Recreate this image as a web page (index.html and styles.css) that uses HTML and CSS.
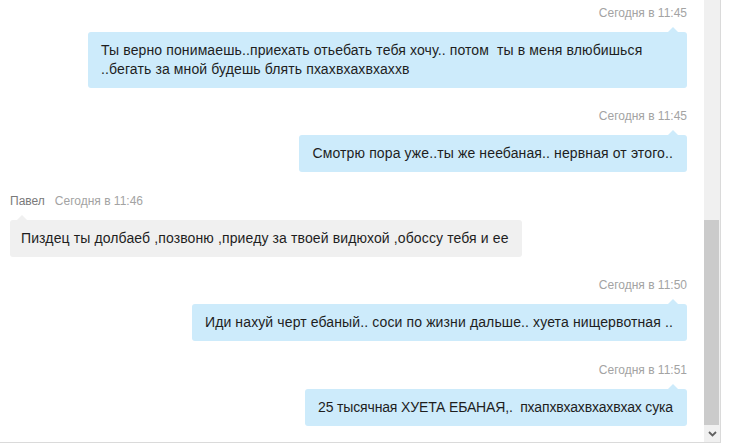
FILE: index.html
```html
<!DOCTYPE html>
<html lang="ru">
<head>
<meta charset="utf-8">
<title>Диалог</title>
<link rel="stylesheet" href="styles.css">
</head>
<body>
<div class="window">
  <div class="messages">
    <div class="msg out">
      <div class="meta"><span class="time">Сегодня в 11:45</span></div>
      <div class="bubble">Ты верно понимаешь..приехать отьебать тебя хочу.. потом&nbsp; ты в меня влюбишься ..бегать за мной будешь блять пхахвхахвхаххв</div>
    </div>
    <div class="msg out">
      <div class="meta"><span class="time">Сегодня в 11:45</span></div>
      <div class="bubble">Смотрю пора уже..ты же неебаная.. нервная от этого..</div>
    </div>
    <div class="msg in">
      <div class="meta"><span class="name">Павел</span><span class="time">Сегодня в 11:46</span></div>
      <div class="bubble">Пиздец ты долбаеб ,позвоню ,приеду за твоей видюхой ,обоссу тебя и ее</div>
    </div>
    <div class="msg out">
      <div class="meta"><span class="time">Сегодня в 11:50</span></div>
      <div class="bubble">Иди нахуй черт ебаный.. соси по жизни дальше.. хуета нищервотная ..</div>
    </div>
    <div class="msg out">
      <div class="meta"><span class="time">Сегодня в 11:51</span></div>
      <div class="bubble narrow">25 тысячная ХУЕТА ЕБАНАЯ,.&nbsp; пхапхвхахвхахвхах сука</div>
    </div>
  </div>
  <div class="scrollbar">
    <div class="track"></div>
    <div class="thumb"></div>
    <div class="arrow">
      <svg width="9" height="6" viewBox="0 0 9 6"><path d="M1 1 L4.5 4.5 L8 1" fill="none" stroke="#606060" stroke-width="1.8"/></svg>
    </div>
  </div>
</div>
</body>
</html>
```

FILE: styles.css
```css
* { box-sizing: border-box; }
html, body { margin: 0; padding: 0; background: #ffffff; }
body {
  font-family: "Liberation Sans", Arial, sans-serif;
  color: #1e1e1e;
  width: 735px;
  height: 446px;
  overflow: hidden;
}
.window {
  display: flex;
  width: 721px;
  height: 443px;
  border-right: 1px solid #dadada;
  border-bottom: 1px solid #dadada;
}
.messages {
  flex: 1;
  display: flex;
  flex-direction: column;
  gap: 21.4px;
  padding: 6px 17px 0 10px;
}
.msg {
  display: flex;
  flex-direction: column;
}
.msg.out { align-items: flex-end; }
.msg.in { align-items: flex-start; }
.meta {
  font-size: 12px;
  line-height: 14px;
  height: 14px;
  margin-bottom: 12px;
  display: flex;
  gap: 10px;
}
.time { color: #a3a3a3; }
.name { color: #7a7a7a; }
.bubble {
  position: relative;
  font-size: 14px;
  letter-spacing: 0.12px;
  line-height: 19px;
  padding: 9px 14px 9px 13px;
  border-radius: 3px;
  max-width: 599px;
}
.bubble.narrow { letter-spacing: -0.15px; }
.out .bubble { background: #cdebfb; }
.in .bubble { background: #f0f0f0; padding-left: 11px; padding-right: 13px; }
.bubble::before {
  content: "";
  position: absolute;
  top: -5px;
  width: 0;
  height: 0;
  border-left: 5px solid transparent;
  border-right: 5px solid transparent;
  border-bottom: 5px solid #cdebfb;
}
.out .bubble::before { right: 9px; }
.in .bubble::before { left: 7px; border-bottom-color: #f0f0f0; }
.scrollbar {
  width: 16px;
  background: #f0f0f0;
  display: flex;
  flex-direction: column;
}
.track { height: 220px; }
.thumb { height: 205px; background: #cbcbcb; margin-right: 1px; }
.arrow {
  flex: 1;
  display: flex;
  align-items: center;
  justify-content: center;
}
.arrow svg { display: block; }
```
